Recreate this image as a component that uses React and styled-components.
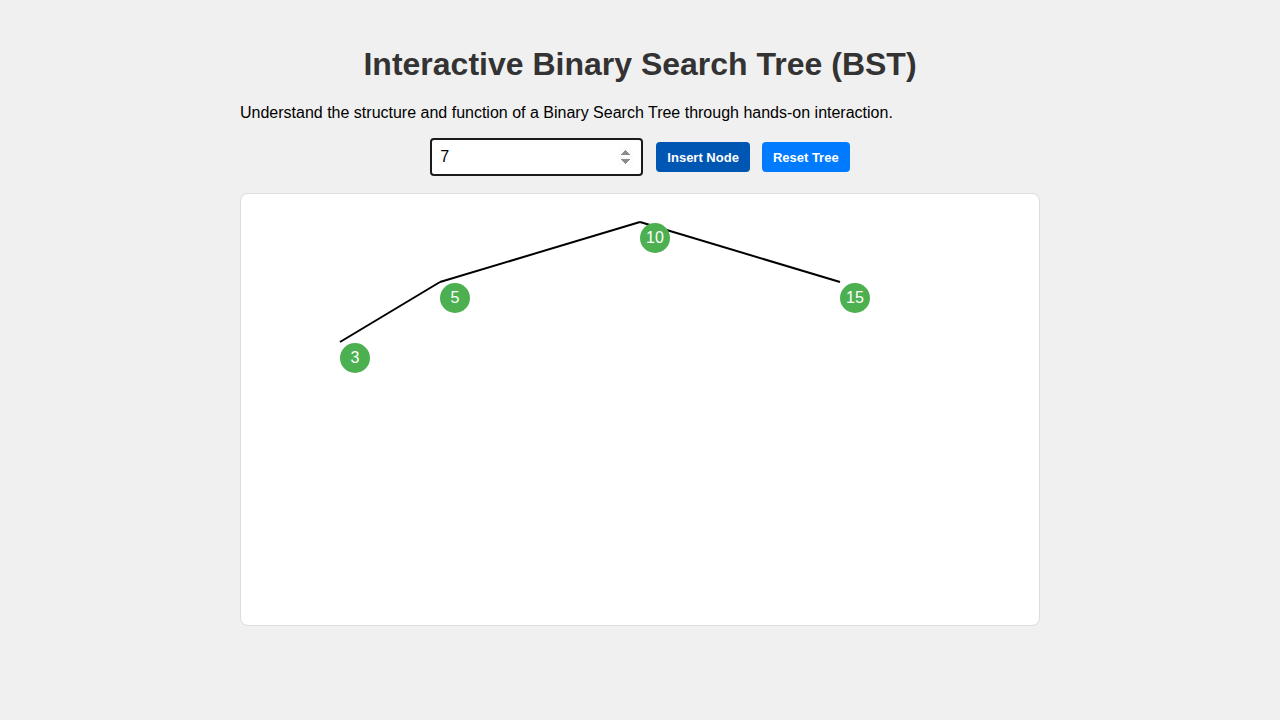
import React, { useState } from "react";
import styled, { createGlobalStyle } from "styled-components";

const Global = createGlobalStyle`
  html, body { margin: 0; padding: 0; background: #f0f0f0; }
  body { font-family: "Liberation Sans", Arial, sans-serif; }
`;

const Page = styled.div`
  width: 800px;
  margin: 0 auto;
  padding-top: 46px;
`;

const Title = styled.h1`
  margin: 0;
  font-size: 32px;
  line-height: 37px;
  font-weight: bold;
  color: #333;
  text-align: center;
`;

const Intro = styled.p`
  margin: 21px 0 0;
  font-size: 16px;
  line-height: 18px;
  color: #000;
`;

const Controls = styled.div`
  display: flex;
  justify-content: center;
  align-items: center;
  gap: 12px;
  margin-top: 16px;
  height: 38px;
`;

const NumberInput = styled.input`
  box-sizing: border-box;
  width: 213px;
  height: 38px;
  margin-right: 1px;
  padding: 0 8px;
  border: 2px solid #1a1a1a;
  border-radius: 4px;
  background: #fff;
  font-family: "Liberation Sans", Arial, sans-serif;
  font-size: 16px;
  color: #000;
  outline: none;
  &::-webkit-inner-spin-button,
  &::-webkit-outer-spin-button {
    opacity: 1;
  }
`;

const Button = styled.button`
  box-sizing: border-box;
  height: 30px;
  padding: 0 11px;
  border: none;
  border-radius: 4px;
  background: ${(p) => (p.$dark ? "#0056b3" : "#007bff")};
  color: #fff;
  font-family: "Liberation Sans", Arial, sans-serif;
  font-size: 13px;
  font-weight: bold;
  cursor: pointer;
`;

const Canvas = styled.div`
  position: relative;
  box-sizing: border-box;
  margin-top: 17px;
  height: 433px;
  background: #fff;
  border: 1px solid #ddd;
  border-radius: 8px;
`;

const Lines = styled.svg`
  position: absolute;
  left: 0;
  top: 0;
  width: 100%;
  height: 100%;
  overflow: visible;
`;

const Node = styled.div`
  position: absolute;
  width: 30px;
  height: 30px;
  border-radius: 50%;
  background: #4caf50;
  color: #fff;
  font-size: 16px;
  display: flex;
  align-items: center;
  justify-content: center;
`;

const nodes = [
  { v: 10, x: 399, y: 29 },
  { v: 5, x: 199, y: 89 },
  { v: 15, x: 599, y: 89 },
  { v: 3, x: 99, y: 149 },
];

const edges = [
  [0, 1],
  [0, 2],
  [1, 3],
];

export default function App() {
  const [val, setVal] = useState("7");
  return (
    <>
      <Global />
      <Page>
        <Title>Interactive Binary Search Tree (BST)</Title>
        <Intro>
          Understand the structure and function of a Binary Search Tree through hands-on interaction.
        </Intro>
        <Controls>
          <NumberInput type="number" value={val} onChange={(e) => setVal(e.target.value)} />
          <Button $dark>Insert Node</Button>
          <Button>Reset Tree</Button>
        </Controls>
        <Canvas>
          <Lines>
            {edges.map(([a, b]) => (
              <line
                key={`${a}-${b}`}
                x1={nodes[a].x}
                y1={nodes[a].y - 1}
                x2={nodes[b].x}
                y2={nodes[b].y - 1}
                stroke="#000"
                strokeWidth="2"
              />
            ))}
          </Lines>
          {nodes.map((n) => (
            <Node key={n.v} style={{ left: n.x, top: n.y }}>
              {n.v}
            </Node>
          ))}
        </Canvas>
      </Page>
    </>
  );
}
